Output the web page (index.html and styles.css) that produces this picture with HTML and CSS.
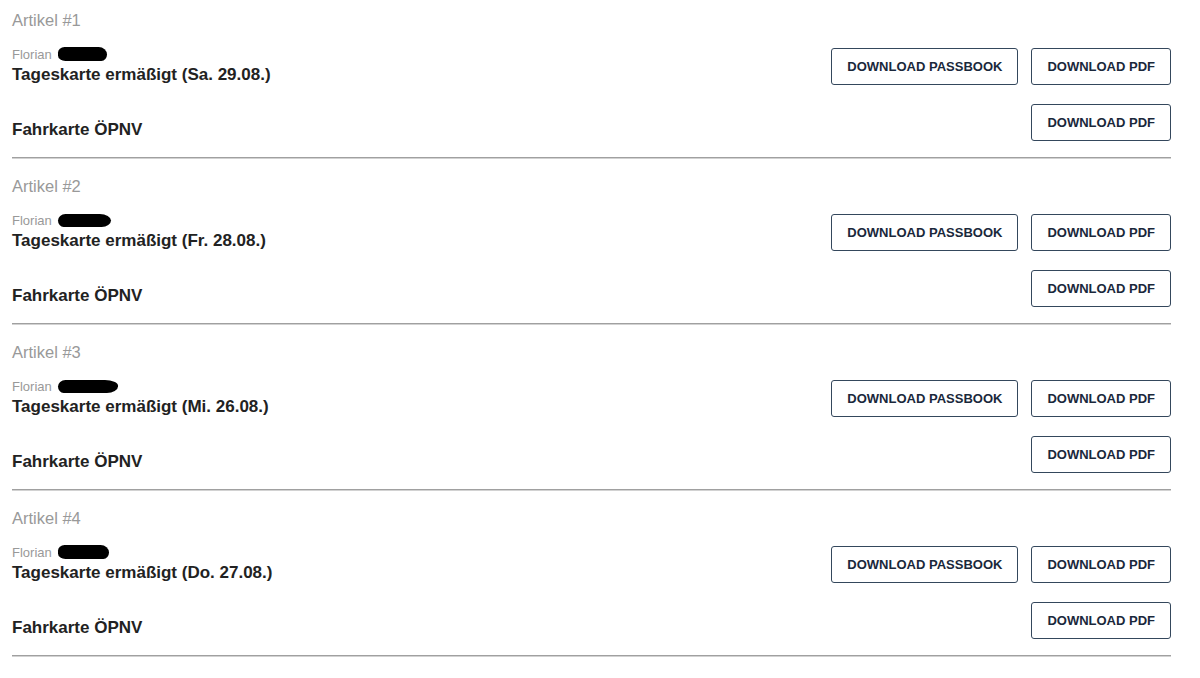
FILE: index.html
```html
<!DOCTYPE html>
<html lang="de">
<head>
<meta charset="utf-8">
<title>Artikel</title>
<link rel="stylesheet" href="styles.css">
</head>
<body>
<main class="list">
  <section class="item">
    <div class="item-title">Artikel #1</div>
    <div class="row">
      <div class="info">
        <div class="owner">Florian <span class="redact r1"></span></div>
        <div class="ticket">Tageskarte ermäßigt (Sa. 29.08.)</div>
      </div>
      <div class="actions">
        <button class="btn">Download Passbook</button>
        <button class="btn">Download PDF</button>
      </div>
    </div>
    <div class="row">
      <div class="ticket">Fahrkarte ÖPNV</div>
      <div class="actions">
        <button class="btn">Download PDF</button>
      </div>
    </div>
    <div class="divider"></div>
  </section>

  <section class="item">
    <div class="item-title">Artikel #2</div>
    <div class="row">
      <div class="info">
        <div class="owner">Florian <span class="redact r2"></span></div>
        <div class="ticket">Tageskarte ermäßigt (Fr. 28.08.)</div>
      </div>
      <div class="actions">
        <button class="btn">Download Passbook</button>
        <button class="btn">Download PDF</button>
      </div>
    </div>
    <div class="row">
      <div class="ticket">Fahrkarte ÖPNV</div>
      <div class="actions">
        <button class="btn">Download PDF</button>
      </div>
    </div>
    <div class="divider"></div>
  </section>

  <section class="item">
    <div class="item-title">Artikel #3</div>
    <div class="row">
      <div class="info">
        <div class="owner">Florian <span class="redact r3"></span></div>
        <div class="ticket">Tageskarte ermäßigt (Mi. 26.08.)</div>
      </div>
      <div class="actions">
        <button class="btn">Download Passbook</button>
        <button class="btn">Download PDF</button>
      </div>
    </div>
    <div class="row">
      <div class="ticket">Fahrkarte ÖPNV</div>
      <div class="actions">
        <button class="btn">Download PDF</button>
      </div>
    </div>
    <div class="divider"></div>
  </section>

  <section class="item">
    <div class="item-title">Artikel #4</div>
    <div class="row">
      <div class="info">
        <div class="owner">Florian <span class="redact r4"></span></div>
        <div class="ticket">Tageskarte ermäßigt (Do. 27.08.)</div>
      </div>
      <div class="actions">
        <button class="btn">Download Passbook</button>
        <button class="btn">Download PDF</button>
      </div>
    </div>
    <div class="row">
      <div class="ticket">Fahrkarte ÖPNV</div>
      <div class="actions">
        <button class="btn">Download PDF</button>
      </div>
    </div>
    <div class="divider"></div>
  </section>
</main>
</body>
</html>
```

FILE: styles.css
```css
* {
  box-sizing: border-box;
}

html, body {
  margin: 0;
  padding: 0;
  background: #ffffff;
}

body {
  font-family: "Liberation Sans", Arial, sans-serif;
  color: #222222;
}

.list {
  width: 1159px;
  margin-left: 12px;
  padding-top: 11px;
}

.item {
  display: flex;
  flex-direction: column;
}

.item-title {
  font-size: 16.5px;
  line-height: 18px;
  color: #999999;
}

.row {
  display: flex;
  justify-content: space-between;
  align-items: flex-end;
  margin-top: 19px;
}

.info {
  display: flex;
  flex-direction: column;
}

.owner {
  font-size: 13px;
  line-height: 14px;
  margin-bottom: 4px;
  color: #999999;
  display: flex;
  align-items: center;
  gap: 6px;
}

.redact {
  display: inline-block;
  height: 14px;
  background: #000000;
  border-radius: 7px 9px 6px 8px / 6px 8px 7px 6px;
  transform: translateY(-1px);
}

.r1 { width: 49px; }
.r2 { width: 53px; border-radius: 8px 12px 10px 6px / 7px 7px 7px 7px; height: 13px; }
.r3 { width: 60px; border-radius: 8px 14px 12px 6px / 7px 6px 7px 7px; height: 13px; }
.r4 { width: 51px; }

.ticket {
  font-size: 17px;
  line-height: 18px;
  font-weight: bold;
  color: #222222;
  padding-bottom: 1px;
}

.row > .ticket {
  padding-bottom: 2px;
}

.actions {
  display: flex;
  gap: 13px;
}

.btn {
  height: 37px;
  padding: 0 15px;
  border: 1px solid #34475c;
  border-radius: 3px;
  background: #ffffff;
  color: #1a283b;
  font-family: "Liberation Sans", Arial, sans-serif;
  font-size: 13px;
  font-weight: bold;
  text-transform: uppercase;
  cursor: pointer;
}

.divider {
  margin-top: 16px;
  margin-bottom: 18px;
  height: 2px;
  border-top: 1px solid #a0a0a0;
  border-bottom: 1px solid #d2d2d2;
}
```
